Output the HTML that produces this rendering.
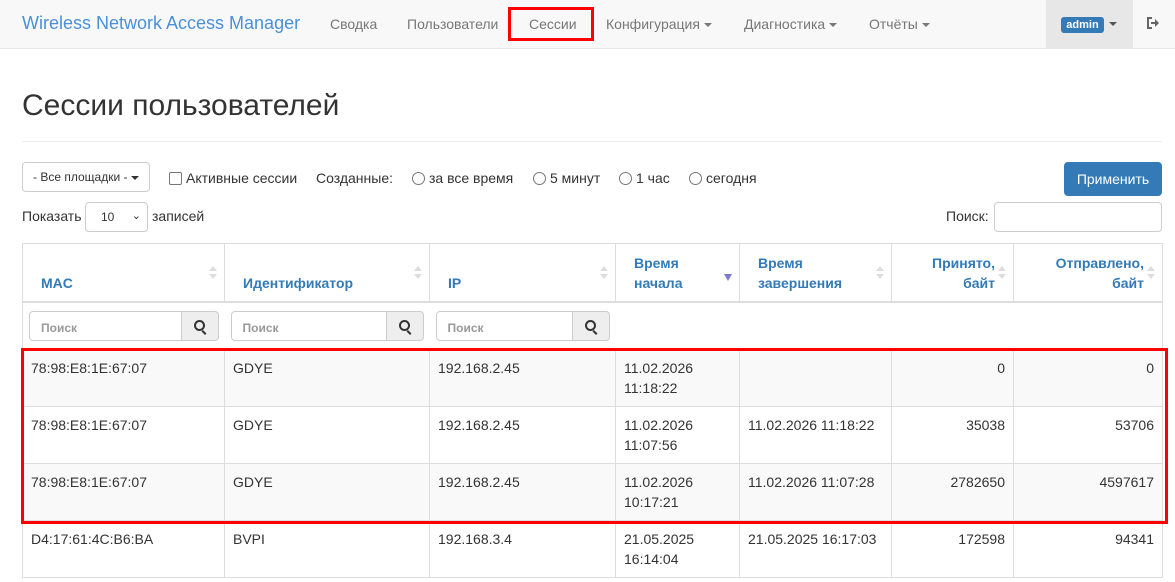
<!DOCTYPE html>
<html><head><meta charset="utf-8"><style>
*{box-sizing:border-box}
body{margin:0;width:1175px;height:582px;overflow:hidden;background:#fff;font-family:"Liberation Sans",Arial,sans-serif;font-size:14px;color:#333;position:relative}
.nav{position:absolute;left:0;top:0;width:1175px;height:49px;background:#f8f8f8;border-bottom:1px solid #e7e7e7}
.a{position:absolute;top:16px;color:#777;font-size:14px;white-space:nowrap}
.car{display:inline-block;width:0;height:0;border-left:4px solid transparent;border-right:4px solid transparent;border-top:4px solid #777;vertical-align:middle;margin-left:4px}
.abs{position:absolute}
table{position:absolute;left:22px;top:243px;border-collapse:collapse;table-layout:fixed;width:1140px}
td,th{border:1px solid #ddd;padding:8px;vertical-align:top;line-height:20px}
th{color:#337ab7;font-weight:bold;vertical-align:bottom;text-align:left;border-bottom:2px solid #ddd;position:relative;padding-left:18px}
th.r{text-align:right;padding-right:18px}
.s{position:absolute;right:7px;top:22px;width:8px;height:14px}
.s:before{content:"";position:absolute;left:0;top:0;border-left:4px solid transparent;border-right:4px solid transparent;border-bottom:5px solid #ddd}
.s:after{content:"";position:absolute;left:0;top:8px;border-left:4px solid transparent;border-right:4px solid transparent;border-top:5px solid #ddd}
.d:before{display:none}.d:after{border-top-color:#7b7bd4;border-top-width:7px;border-left-width:4px;border-right-width:4px}
td.r{text-align:right}
tr.st td{background:#f9f9f9}
.ig{display:flex;height:30px}
.ig .in{flex:1;border:1px solid #ccc;border-radius:4px 0 0 4px;color:#999;font-size:12px;padding:6px 11px;font-weight:bold}
.ig .b{width:37px;border:1px solid #ccc;border-left:0;border-radius:0 4px 4px 0;background:#eee;position:relative}
.mg{position:absolute;left:12px;top:8px;width:11px;height:11px;border:2px solid #333;border-radius:50%}
.mg:after{content:"";position:absolute;left:7px;top:8px;width:2px;height:5px;background:#333;transform:rotate(-45deg)}
.rad{display:inline-block;width:13px;height:13px;border:1px solid #767676;border-radius:50%;vertical-align:-2px;margin-right:4px}
</style></head><body>
<div class="nav">
<div class="a" style="left:22px;top:13px;font-size:18px;color:#4a90d9">Wireless Network Access Manager</div>
<div class="a" style="left:330px">Сводка</div>
<div class="a" style="left:407px">Пользователи</div>
<div class="a" style="left:529px">Сессии</div>
<div class="abs" style="left:508px;top:7px;width:86px;height:34px;border:3px solid #f00"></div>
<div class="a" style="left:606px">Конфигурация<span class="car"></span></div>
<div class="a" style="left:744px">Диагностика<span class="car"></span></div>
<div class="a" style="left:869px">Отчёты<span class="car"></span></div>
<div class="abs" style="left:1046px;top:0;width:87px;height:49px;background:#e7e7e7"></div>
<div class="abs" style="left:1061px;top:17px;width:43px;height:16px;background:#337ab7;border-radius:3px;color:#fff;font-size:11px;font-weight:bold;text-align:center;line-height:16px">admin</div>
<div class="abs" style="left:1109px;top:22px;border-left:4px solid transparent;border-right:4px solid transparent;border-top:4px solid #555"></div>
<svg class="abs" style="left:1146px;top:16px" width="14" height="14" viewBox="0 0 14 14"><path d="M6 2H2v10h4" fill="none" stroke="#666" stroke-width="2"/><path d="M5 6h4V3l4 4-4 4V8H5z" fill="#666"/></svg>
</div>
<div class="abs" style="left:22px;top:89px;font-size:30px;color:#333">Сессии пользователей</div>
<div class="abs" style="left:22px;top:141px;width:1140px;height:1px;background:#eee"></div>
<div class="abs" style="left:22px;top:162px;width:128px;height:30px;border:1px solid #ccc;border-radius:4px;font-size:12px;padding:7px 0 0 10px;white-space:nowrap">- Все площадки -<span class="car" style="border-top-color:#333"></span></div>
<div class="abs" style="left:169px;top:170px"><span style="display:inline-block;width:13px;height:13px;border:1px solid #767676;border-radius:2px;vertical-align:-2px;margin-right:4px"></span>Активные сессии</div>
<div class="abs" style="left:316px;top:170px">Созданные:</div>
<div class="abs" style="left:412px;top:170px"><span class="rad"></span>за все время</div>
<div class="abs" style="left:533px;top:170px"><span class="rad"></span>5 минут</div>
<div class="abs" style="left:619px;top:170px"><span class="rad"></span>1 час</div>
<div class="abs" style="left:689px;top:170px"><span class="rad"></span>сегодня</div>
<div class="abs" style="left:1064px;top:162px;width:98px;height:34px;background:#337ab7;border-radius:4px;color:#fff;text-align:center;line-height:34px">Применить</div>
<div class="abs" style="left:22px;top:208px">Показать</div>
<div class="abs" style="left:85px;top:202px;width:63px;height:30px;border:1px solid #ccc;border-radius:4px;font-size:12px;padding:7px 15px">10<span style="position:absolute;right:6px;top:6px;font-size:11px">⌄</span></div>
<div class="abs" style="left:152px;top:208px">записей</div>
<div class="abs" style="left:946px;top:208px">Поиск:</div>
<div class="abs" style="left:994px;top:202px;width:168px;height:30px;border:1px solid #ccc;border-radius:4px"></div>
<table>
<colgroup><col style="width:202px"><col style="width:205px"><col style="width:186px"><col style="width:124px"><col style="width:152px"><col style="width:122px"><col style="width:149px"></colgroup>
<tr style="height:58px"><th>MAC<span class="s"></span></th><th>Идентификатор<span class="s"></span></th><th>IP<span class="s"></span></th><th>Время<br>начала<span class="s d"></span></th><th>Время<br>завершения<span class="s"></span></th><th class="r">Принято,<br>байт<span class="s"></span></th><th class="r">Отправлено,<br>байт<span class="s"></span></th></tr>
<tr style="height:48px"><td style="border-right:0;padding:8px 6px"><div class="ig"><div class="in">Поиск</div><div class="b"><span class="mg"></span></div></div></td><td style="border-left:0;border-right:0;padding:8px 6px"><div class="ig"><div class="in">Поиск</div><div class="b"><span class="mg"></span></div></div></td><td style="border-left:0;border-right:0;padding:8px 6px"><div class="ig"><div class="in">Поиск</div><div class="b"><span class="mg"></span></div></div></td><td colspan="4" style="border-left:0"></td></tr>
<tr class="st" style="height:57px"><td>78:98:E8:1E:67:07</td><td>GDYE</td><td>192.168.2.45</td><td>11.02.2026<br>11:18:22</td><td></td><td class="r">0</td><td class="r">0</td></tr>
<tr style="height:57px"><td>78:98:E8:1E:67:07</td><td>GDYE</td><td>192.168.2.45</td><td>11.02.2026<br>11:07:56</td><td>11.02.2026 11:18:22</td><td class="r">35038</td><td class="r">53706</td></tr>
<tr class="st" style="height:57px"><td>78:98:E8:1E:67:07</td><td>GDYE</td><td>192.168.2.45</td><td>11.02.2026<br>10:17:21</td><td>11.02.2026 11:07:28</td><td class="r">2782650</td><td class="r">4597617</td></tr>
<tr style="height:57px"><td>D4:17:61:4C:B6:BA</td><td>BVPI</td><td>192.168.3.4</td><td>21.05.2025<br>16:14:04</td><td>21.05.2025 16:17:03</td><td class="r">172598</td><td class="r">94341</td></tr>
</table>
<div class="abs" style="left:21px;top:348px;width:1147px;height:176px;border:3px solid #f00"></div>
</body></html>
